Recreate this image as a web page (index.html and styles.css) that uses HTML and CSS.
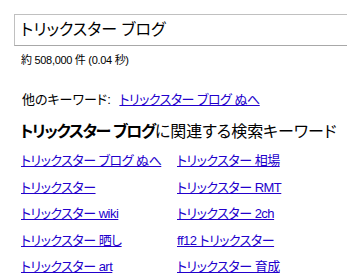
FILE: index.html
```html
<!DOCTYPE html>
<html lang="ja">
<head>
    <meta charset="UTF-8">
    <title>トリックスター ブログ - 検索</title>
    <link rel="stylesheet" href="styles.css">
</head>
<body>
    <div class="search-box">トリックスター ブログ</div>
    <p class="stats">約 508,000 件 (0.04 秒)</p>

    <p class="other">他のキーワード: <a href="#">トリックスター ブログ ぬへ</a></p>

    <h2 class="related"><b>トリックスター ブログ</b>に関連する検索キーワード</h2>
    <div class="links">
        <a href="#">トリックスター ブログ ぬへ</a>
        <a href="#">トリックスター 相場</a>
        <a href="#">トリックスター</a>
        <a href="#">トリックスター RMT</a>
        <a href="#">トリックスター wiki</a>
        <a href="#">トリックスター 2ch</a>
        <a href="#">トリックスター 晒し</a>
        <a href="#">ff12 トリックスター</a>
        <a href="#">トリックスター art</a>
        <a href="#">トリックスター 育成</a>
    </div>
</body>
</html>
```

FILE: styles.css
```css
body {
    margin: 0;
    padding: 14px 0 0 14px;
    font-family: "Liberation Sans", "Noto Sans CJK JP", sans-serif;
    font-feature-settings: "palt";
    color: #000;
    background: #fff;
    overflow: hidden;
}
a {
    color: #2200cc;
}
.search-box {
    box-sizing: border-box;
    width: 333px;
    height: 32px;
    padding: 0 6px;
    border: 1px solid #c0c0c0;
    border-right: none;
    border-bottom-color: #a8a8a8;
    font-size: 16px;
    line-height: 30px;
}
.stats {
    margin: 6px 0 0 7px;
    font-size: 11px;
    line-height: 16px;
    letter-spacing: -0.3px;
}
.other {
    margin: 24px 0 0 8px;
    font-size: 13px;
    line-height: 16px;
}
.other a {
    margin-left: 5px;
    letter-spacing: -0.5px;
}
.related {
    margin: 14px 0 0 6px;
    font-size: 16px;
    font-weight: normal;
    line-height: 20px;
    white-space: nowrap;
}
.related b {
    font-weight: bold;
    letter-spacing: -1.4px;
}
.links {
    display: grid;
    grid-template-columns: 156px auto;
    row-gap: 10px;
    margin: 11px 0 0 7px;
    font-size: 13px;
    line-height: 16.5px;
    letter-spacing: -0.5px;
}
```
